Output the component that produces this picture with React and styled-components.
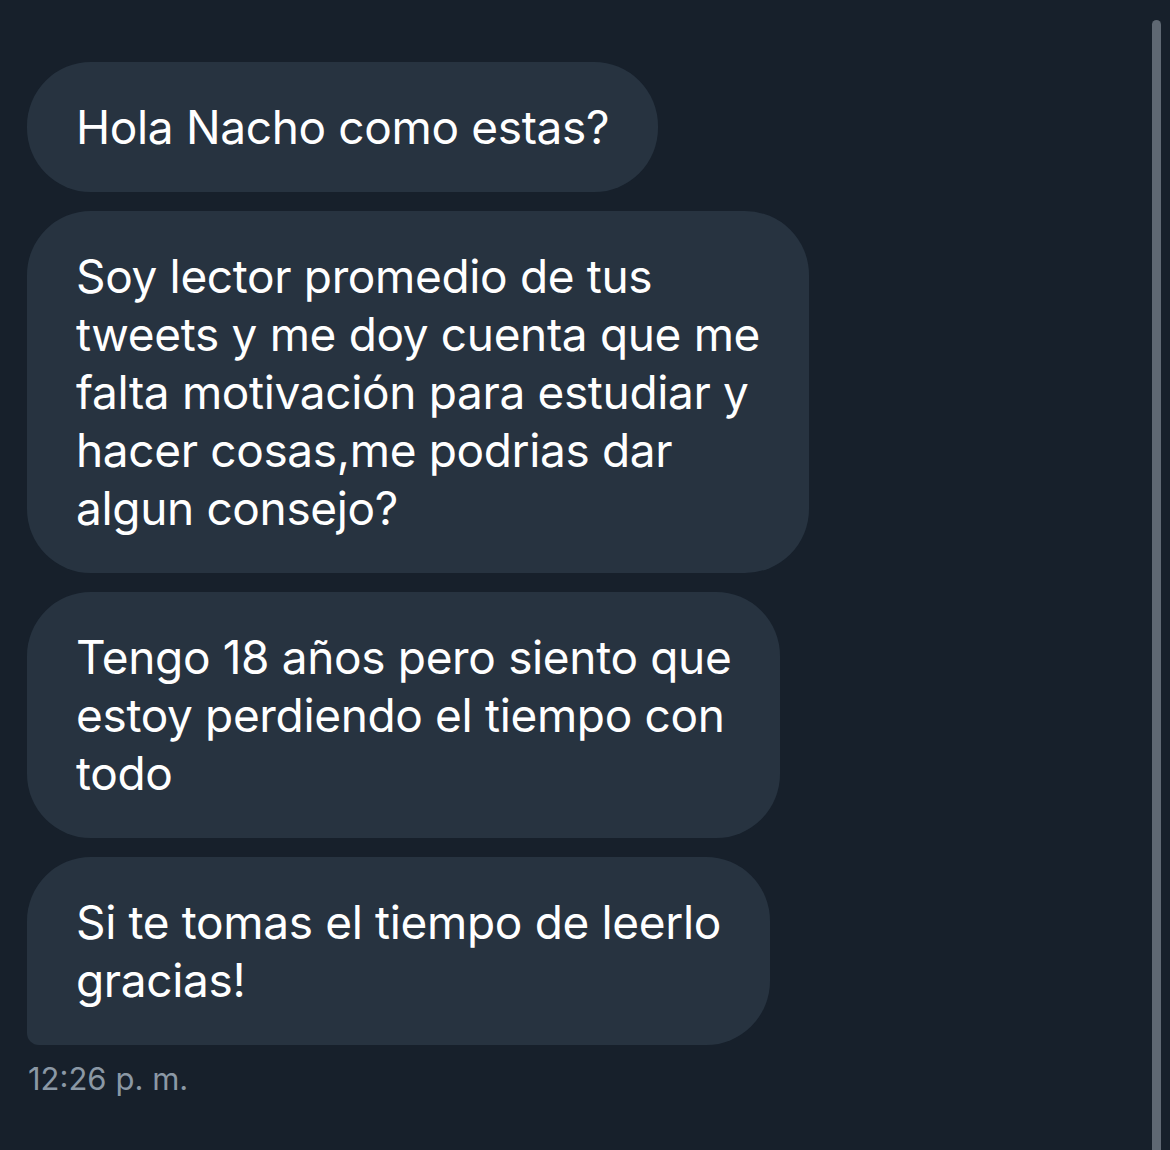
import styled, { createGlobalStyle } from "styled-components";

const GlobalStyle = createGlobalStyle`
  html, body {
    margin: 0;
    padding: 0;
    background: #17202b;
  }
  * {
    box-sizing: border-box;
  }
`;

const Page = styled.div`
  height: 1150px;
  display: flex;
  background: #17202b;
  font-family: Inter, "Noto Sans", sans-serif;
  overflow: hidden;
`;

const Conversation = styled.main`
  flex: 1;
  padding: 62px 0 0 27px;
  display: flex;
  flex-direction: column;
  align-items: flex-start;
  gap: 19px;
`;

const Bubble = styled.div`
  background: #273340;
  color: #ffffff;
  font-size: 46px;
  line-height: 58px;
  letter-spacing: -0.35px;
  padding: 36px 49px;
  border-radius: ${({ $last }) => ($last ? "64px 64px 64px 12px" : "64px")};
  white-space: nowrap;
`;

const Meta = styled.div`
  margin-top: -5px;
  color: #8b98a5;
  font-size: 31px;
  line-height: 40px;
  padding-left: 1px;
  span {
    margin-left: 9px;
  }
`;

const ScrollTrack = styled.div`
  width: 9px;
  margin-right: 9px;
  padding-top: 20px;
  display: flex;
  flex-direction: column;
`;

const ScrollThumb = styled.div`
  flex: 1;
  background: #5f6873;
  border-radius: 5px 5px 0 0;
`;

const messages = [
  ["Hola Nacho como estas?"],
  [
    "Soy lector promedio de tus",
    "tweets y me doy cuenta que me",
    "falta motivación para estudiar y",
    "hacer cosas,me podrias dar",
    "algun consejo?",
  ],
  ["Tengo 18 años pero siento que", "estoy perdiendo el tiempo con", "todo"],
  ["Si te tomas el tiempo de leerlo", "gracias!"],
];

const App = () => {
  return (
    <>
      <GlobalStyle />
      <Page>
        <Conversation>
          {messages.map((lines, i) => (
            <Bubble key={i} $last={i === messages.length - 1}>
              {lines.map((line, j) => (
                <div key={j}>{line}</div>
              ))}
            </Bubble>
          ))}
          <Meta>
            12:26<span>p. m.</span>
          </Meta>
        </Conversation>
        <ScrollTrack>
          <ScrollThumb />
        </ScrollTrack>
      </Page>
    </>
  );
};

export default App;
